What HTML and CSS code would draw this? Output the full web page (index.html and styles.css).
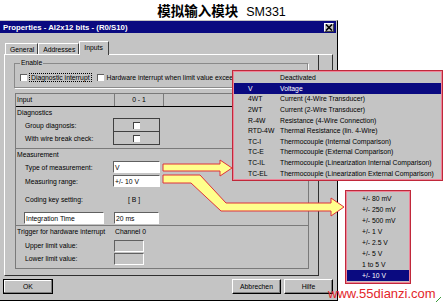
FILE: index.html
```html
<!DOCTYPE html>
<html lang="zh">
<head>
  <meta charset="UTF-8">
  <meta name="viewport" content="width=device-width, initial-scale=1.0">
  <title>模拟输入模块 SM331</title>
  <link rel="stylesheet" href="styles.css">
</head>
<body>
  <div class="page">
    <h1 class="heading"><span class="cn">模拟输入模块</span><span class="en">SM331</span></h1>

    <div class="dialog">
      <div class="titlebar">
        <span class="caption">Properties - AI2x12 bits - (R0/S10)</span>
        <span class="close">
          <svg width="8" height="7" viewBox="0 0 8 7"><path d="M1 0.5 L7 6.5 M7 0.5 L1 6.5" stroke="#000" stroke-width="1.6"/></svg>
        </span>
      </div>

      <div class="tabs">
        <div class="tab">General</div>
        <div class="tab">Addresses</div>
        <div class="tab active">Inputs</div>
      </div>

      <div class="panel">
        <div class="group">
          <span class="legend">Enable</span>
          <div class="check"><span class="box"></span><span class="focus">Diagnostic interrupt</span></div>
          <div class="check"><span class="box"></span><span>Hardware interrupt when limit value exceeded</span></div>
        </div>

        <div class="grid">
          <div class="head">
            <div class="c1">Input</div>
            <div class="c2">0 - 1</div>
            <div class="c3"></div>
          </div>

          <!-- Diagnostics -->
          <div class="section diag">
            <div class="title">Diagnostics</div>
            <div class="line first"><span class="label">Group diagnosis:</span><span class="cell"><span class="tick"></span></span></div>
            <div class="line"><span class="label">With wire break check:</span><span class="cell"><span class="tick"></span></span></div>
          </div>

          <!-- Measurement -->
          <div class="section meas">
            <div class="title">Measurement</div>
            <div class="line"><span class="label">Type of measurement:</span><span class="field">V</span></div>
            <div class="line"><span class="label">Measuring range:</span><span class="field">+/- 10 V</span></div>
            <div class="line key"><span class="label">Coding key setting:</span><span class="value">[ B ]</span></div>
            <div class="line"><span class="field wide">Integration Time</span><span class="field short">20 ms</span></div>
          </div>

          <!-- Trigger -->
          <div class="section trig">
            <div class="title"><span class="tlabel">Trigger for hardware interrupt</span><span>Channel 0</span></div>
            <div class="line"><span class="label">Upper limit value:</span><span class="field off"></span></div>
            <div class="line"><span class="label">Lower limit value:</span><span class="field off"></span></div>
          </div>
        </div>
      </div>

      <div class="buttons">
        <button class="btn ok">OK</button>
        <span class="spacer"></span>
        <button class="btn">Abbrechen</button>
        <button class="btn">Hilfe</button>
      </div>
    </div>

    <div class="popup types">
      <div class="opt"><span class="code"></span>Deactivated</div>
      <div class="opt sel"><span class="code">V</span>Voltage</div>
      <div class="opt"><span class="code">4WT</span>Current (4-Wire Transducer)</div>
      <div class="opt"><span class="code">2WT</span>Current (2-Wire Transducer)</div>
      <div class="opt"><span class="code">R-4W</span>Resistance (4-Wire Connection)</div>
      <div class="opt"><span class="code">RTD-4W</span>Thermal Resistance (lin. 4-Wire)</div>
      <div class="opt"><span class="code">TC-I</span>Thermocouple (Internal Comparison)</div>
      <div class="opt"><span class="code">TC-E</span>Thermocouple (External Comparison)</div>
      <div class="opt"><span class="code">TC-IL</span>Thermocouple (Linearization Internal Comparison)</div>
      <div class="opt"><span class="code">TC-EL</span>Thermocouple (Linearization External Comparison)</div>
    </div>

    <div class="popup ranges">
      <div class="opt">+/- 80 mV</div>
      <div class="opt">+/- 250 mV</div>
      <div class="opt">+/- 500 mV</div>
      <div class="opt">+/- 1 V</div>
      <div class="opt">+/- 2.5 V</div>
      <div class="opt">+/- 5 V</div>
      <div class="opt">1 to 5 V</div>
      <div class="opt sel">+/- 10 V</div>
    </div>

    <svg class="arrows" width="443" height="304" viewBox="0 0 443 304">
      <polygon points="163,164 220,164 220,160 232,168 220,176 220,171 163,171" />
      <polygon points="163,175 200,175 226,203 331,203 331,198 344,207 331,216 331,211 221,211 191,183 163,183" />
      <path class="mark" d="M436 302 L441 297" />
    </svg>

    <div class="watermark">www.55dianzi.com</div>
  </div>
</body>
</html>
```

FILE: styles.css
```css
body {
  margin: 0;
  background: #ffffff;
  font-family: 'Liberation Sans', Arial, sans-serif;
  font-size: 6.8px;
  color: #000;
}
.page {
  position: relative;
  width: 443px;
  height: 304px;
  overflow: hidden;
}
.heading {
  margin: 0;
  height: 20px;
  line-height: 20px;
  text-align: center;
  padding-left: 0;
  font-size: 13.5px;
}
.heading .cn {
  font-family: 'Noto Sans CJK SC', sans-serif;
  font-weight: bold;
}
.heading .en {
  font-family: 'Liberation Sans', Arial, sans-serif;
  font-weight: normal;
  font-size: 12.5px;
  margin-left: 8px;
}

/* dialog window */
.dialog {
  width: 338px;
  height: 281px;
  box-sizing: border-box;
  background: #c4c4c4;
  border-top: 1px solid #c4c4c4;
  border-right: 1px solid #000;
  border-bottom: 1px solid #000;
  display: flex;
  flex-direction: column;
}
.titlebar {
  height: 12px;
  margin-right: 1px;
  background: #0a0a80;
  color: #fff;
  font-weight: bold;
  font-size: 7.8px;
  display: flex;
  align-items: center;
  justify-content: space-between;
  padding: 0 2px 0 3px;
}
.close {
  width: 10px;
  height: 9px;
  box-sizing: border-box;
  background: #c4c4c4;
  border: 1px solid;
  border-color: #fff #404040 #404040 #fff;
  display: flex;
  align-items: center;
  justify-content: center;
}
.tabs {
  height: 21px;
  display: flex;
  align-items: flex-end;
  padding-left: 5px;
}
.tab {
  height: 11px;
  line-height: 11px;
  box-sizing: border-box;
  padding: 0 3px 0 4px;
  border-top: 1px solid #fff;
  border-left: 1px solid #fff;
  border-right: 1px solid #404040;
}
.tab.active {
  height: 14px;
  line-height: 12px;
  padding: 0 5px 0 4px;
  margin-bottom: -1px;
  background: #c4c4c4;
  position: relative;
  z-index: 1;
}
.panel {
  position: relative;
  margin-left: 4px;
  width: 315px;
  height: 222px;
  box-sizing: border-box;
  border: 1px solid;
  border-color: #fff #303030 #303030 #fff;
  padding: 8px 0 0 9px;
}
/* upper edge of the wider panel, seen above the callout */
.panel::after {
  content: '';
  position: absolute;
  left: 100%;
  top: -1px;
  width: 14px;
  height: 18px;
  border-top: 1px solid #fff;
  border-right: 1px solid #303030;
}

/* enable group */
.group {
  position: relative;
  width: 294px;
  height: 25px;
  box-sizing: border-box;
  border: 1px solid #8a8a8a;
  box-shadow: 1px 1px 0 #fff;
  display: flex;
  align-items: center;
  gap: 6px;
  padding: 3px 0 0 5px;
}
.legend {
  position: absolute;
  left: 5px;
  top: -5px;
  padding: 0 1px;
  background: #c4c4c4;
  line-height: 8px;
}
.check {
  display: flex;
  align-items: center;
  gap: 3px;
  white-space: nowrap;
}
.box {
  width: 7px;
  height: 7px;
  box-sizing: border-box;
  background: #fff;
  border-top: 1px solid #606060;
  border-left: 1px solid #606060;
}
.focus {
  outline: 1px dotted #000;
  padding: 0 1px;
}

/* input table */
.grid {
  margin: 5px 0 0 1px;
  width: 294px;
  height: 176px;
  box-sizing: border-box;
  border: 1px solid #7a7a7a;
}
.head {
  height: 13px;
  display: flex;
  border-bottom: 1px solid #000;
  box-sizing: border-box;
  line-height: 12px;
}
.head .c1 {
  width: 97px;
  padding-left: 1px;
  border-right: 1px solid #7a7a7a;
}
.head .c2 {
  width: 48px;
  text-align: center;
  border-right: 1px solid #7a7a7a;
}
.section {
  border-bottom: 1px solid #7a7a7a;
  padding-left: 1px;
  box-sizing: border-box;
}
.section .title {
  height: 10px;
  line-height: 10px;
  display: flex;
}
.tlabel {
  width: 98px;
}
.line {
  display: flex;
  align-items: center;
}
.label {
  width: 88px;
  padding-left: 8px;
}
.diag {
  height: 42px;
  padding-top: 1px;
}
.diag .line {
  height: 13px;
}
.diag .line.first {
  height: 14px;
}
.cell {
  width: 47px;
  height: 14px;
  box-sizing: border-box;
  border: 1px solid #404040;
  display: flex;
  align-items: center;
  justify-content: center;
}
.diag .line + .line .cell {
  border-top: none;
  height: 13px;
}
.tick {
  width: 7px;
  height: 7px;
  box-sizing: border-box;
  background: #fff;
  border-top: 1px solid #404040;
  border-left: 1px solid #404040;
}
.meas {
  height: 77px;
  padding-top: 1px;
}
.meas .line {
  height: 14px;
}
.meas .line.key {
  height: 22px;
  padding-bottom: 1px;
}
.field {
  width: 47px;
  height: 12px;
  line-height: 11px;
  box-sizing: border-box;
  background: #fff;
  border: 1px solid;
  border-color: #606060 #fff #fff #606060;
  padding-left: 1px;
}
.field.wide {
  width: 80px;
  margin: 0 10px 0 7px;
}
.field.short {
  width: 45px;
}
.value {
  padding-left: 15px;
}
.trig {
  height: 42px;
  border-bottom: none;
  padding-top: 1px;
}
.trig .title {
  height: 12px;
}
.trig .line {
  height: 13px;
}
.field.off {
  width: 30px;
  margin-left: 1px;
  background: #c4c4c4;
}

/* buttons */
.buttons {
  display: flex;
  margin-top: 3px;
  padding: 0 4px 0 3px;
  gap: 3px;
}
.spacer {
  flex: 1;
}
.btn {
  height: 15px;
  width: 49px;
  padding: 0;
  font: inherit;
  background: #c4c4c4;
  border: 1px solid;
  border-color: #fff #000 #000 #fff;
  box-shadow: inset -1px -1px 0 #808080;
}
.btn.ok {
  width: 50px;
  border-color: #000;
  box-shadow: inset -1px -1px 0 #808080, inset 1px 1px 0 #fff;
}

/* dropdown callouts */
.popup {
  position: absolute;
  background: #c4c4c4;
  border: 1px solid #c0283a;
  box-shadow: inset 0 0 0 1px #ee8398;
  box-sizing: border-box;
  padding: 1px;
}
.popup .opt {
  white-space: nowrap;
  display: flex;
  align-items: center;
}
.popup .sel {
  background: #0a0a80;
  color: #fff;
}
.types {
  left: 232px;
  top: 70px;
  width: 211px;
  height: 111px;
  padding-top: 1.5px;
}
.types .opt {
  height: 10.6px;
  padding-left: 14px;
}
.types .code {
  width: 32px;
}
.ranges {
  left: 345px;
  top: 190px;
  width: 66px;
  height: 94px;
  padding-top: 2.5px;
}
.ranges .opt {
  height: 10.9px;
  padding-left: 15px;
}
.arrows {
  position: absolute;
  left: 0;
  top: 0;
}
.arrows polygon {
  fill: #ffff8c;
  stroke: #e0303a;
  stroke-width: 1;
}
.arrows .mark {
  stroke: #3a9a3a;
  stroke-width: 1;
}
.watermark {
  position: absolute;
  left: 328px;
  top: 287px;
  font-size: 13px;
  line-height: 13px;
  color: #e3262a;
}
```
